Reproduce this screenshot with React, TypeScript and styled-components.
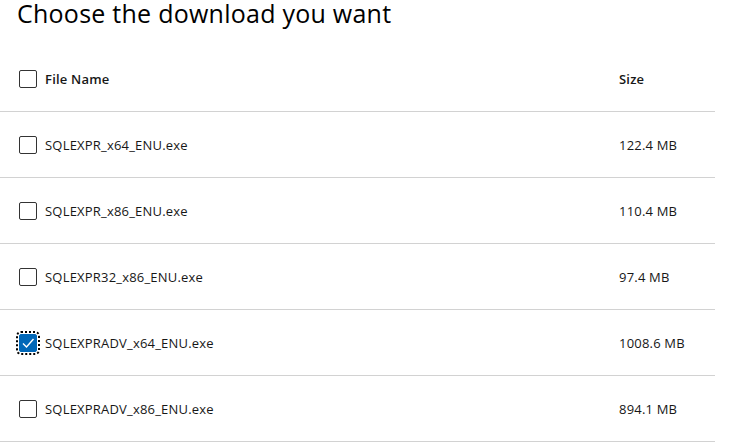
import React, { useState } from 'react';
import styled, { createGlobalStyle } from 'styled-components';

const GlobalStyle = createGlobalStyle`
  body {
    margin: 0;
    background: #fff;
    font-family: "Segoe UI", "Open Sans", "Noto Sans", sans-serif;
    color: #000;
  }
`;

const Page = styled.div`
  width: 715px;
`;

const Title = styled.h1`
  margin: 0;
  height: 46px;
  padding-left: 17px;
  font-size: 25px;
  font-weight: 400;
  line-height: 26px;
  letter-spacing: 0.25px;
  color: #000;
`;

const Row = styled.div`
  display: grid;
  grid-template-columns: 600px 1fr;
  align-items: center;
  height: 65px;
  border-bottom: 1px solid #d2d2d2;
  font-size: 13px;
  letter-spacing: 0.2px;
`;

const NameCell = styled.label<{ $head?: boolean }>`
  display: flex;
  align-items: center;
  gap: 8px;
  padding-left: 19px;
  font-weight: ${p => (p.$head ? 600 : 400)};
  color: #171717;
  cursor: pointer;
`;

const SizeCell = styled.div<{ $head?: boolean }>`
  padding-left: 19px;
  font-weight: ${p => (p.$head ? 600 : 400)};
  color: #171717;
`;

const Box = styled.span<{ $checked: boolean }>`
  box-sizing: border-box;
  width: 18px;
  height: 18px;
  border: 1px solid ${p => (p.$checked ? '#0067b8' : '#333')};
  border-radius: 2px;
  background: ${p => (p.$checked ? '#0067b8' : '#fff')};
  display: inline-flex;
  align-items: center;
  justify-content: center;
  outline: ${p => (p.$checked ? '2px dotted #000' : 'none')};
  outline-offset: 1px;
  flex: none;
`;

const files = [
  { name: 'SQLEXPR_x64_ENU.exe', size: '122.4 MB' },
  { name: 'SQLEXPR_x86_ENU.exe', size: '110.4 MB' },
  { name: 'SQLEXPR32_x86_ENU.exe', size: '97.4 MB' },
  { name: 'SQLEXPRADV_x64_ENU.exe', size: '1008.6 MB' },
  { name: 'SQLEXPRADV_x86_ENU.exe', size: '894.1 MB' },
];

const Check = ({ checked, onClick }: { checked: boolean; onClick: () => void }) => (
  <Box $checked={checked} onClick={onClick}>
    {checked && (
      <svg width="14" height="14" viewBox="0 0 14 14">
        <path d="M2 7.5 L5.5 11 L12.5 3" fill="none" stroke="#fff" strokeWidth="1.4" />
      </svg>
    )}
  </Box>
);

export default function App() {
  const [selected, setSelected] = useState<string[]>(['SQLEXPRADV_x64_ENU.exe']);
  const toggle = (n: string) =>
    setSelected(prev => (prev.includes(n) ? prev.filter(x => x !== n) : [...prev, n]));
  const allChecked = selected.length === files.length;

  return (
    <Page>
      <GlobalStyle />
      <Title>Choose the download you want</Title>
      <Row>
        <NameCell $head>
          <Check
            checked={allChecked}
            onClick={() => setSelected(allChecked ? [] : files.map(f => f.name))}
          />
          File Name
        </NameCell>
        <SizeCell $head>Size</SizeCell>
      </Row>
      {files.map(f => (
        <Row key={f.name}>
          <NameCell>
            <Check checked={selected.includes(f.name)} onClick={() => toggle(f.name)} />
            {f.name}
          </NameCell>
          <SizeCell>{f.size}</SizeCell>
        </Row>
      ))}
    </Page>
  );
}
